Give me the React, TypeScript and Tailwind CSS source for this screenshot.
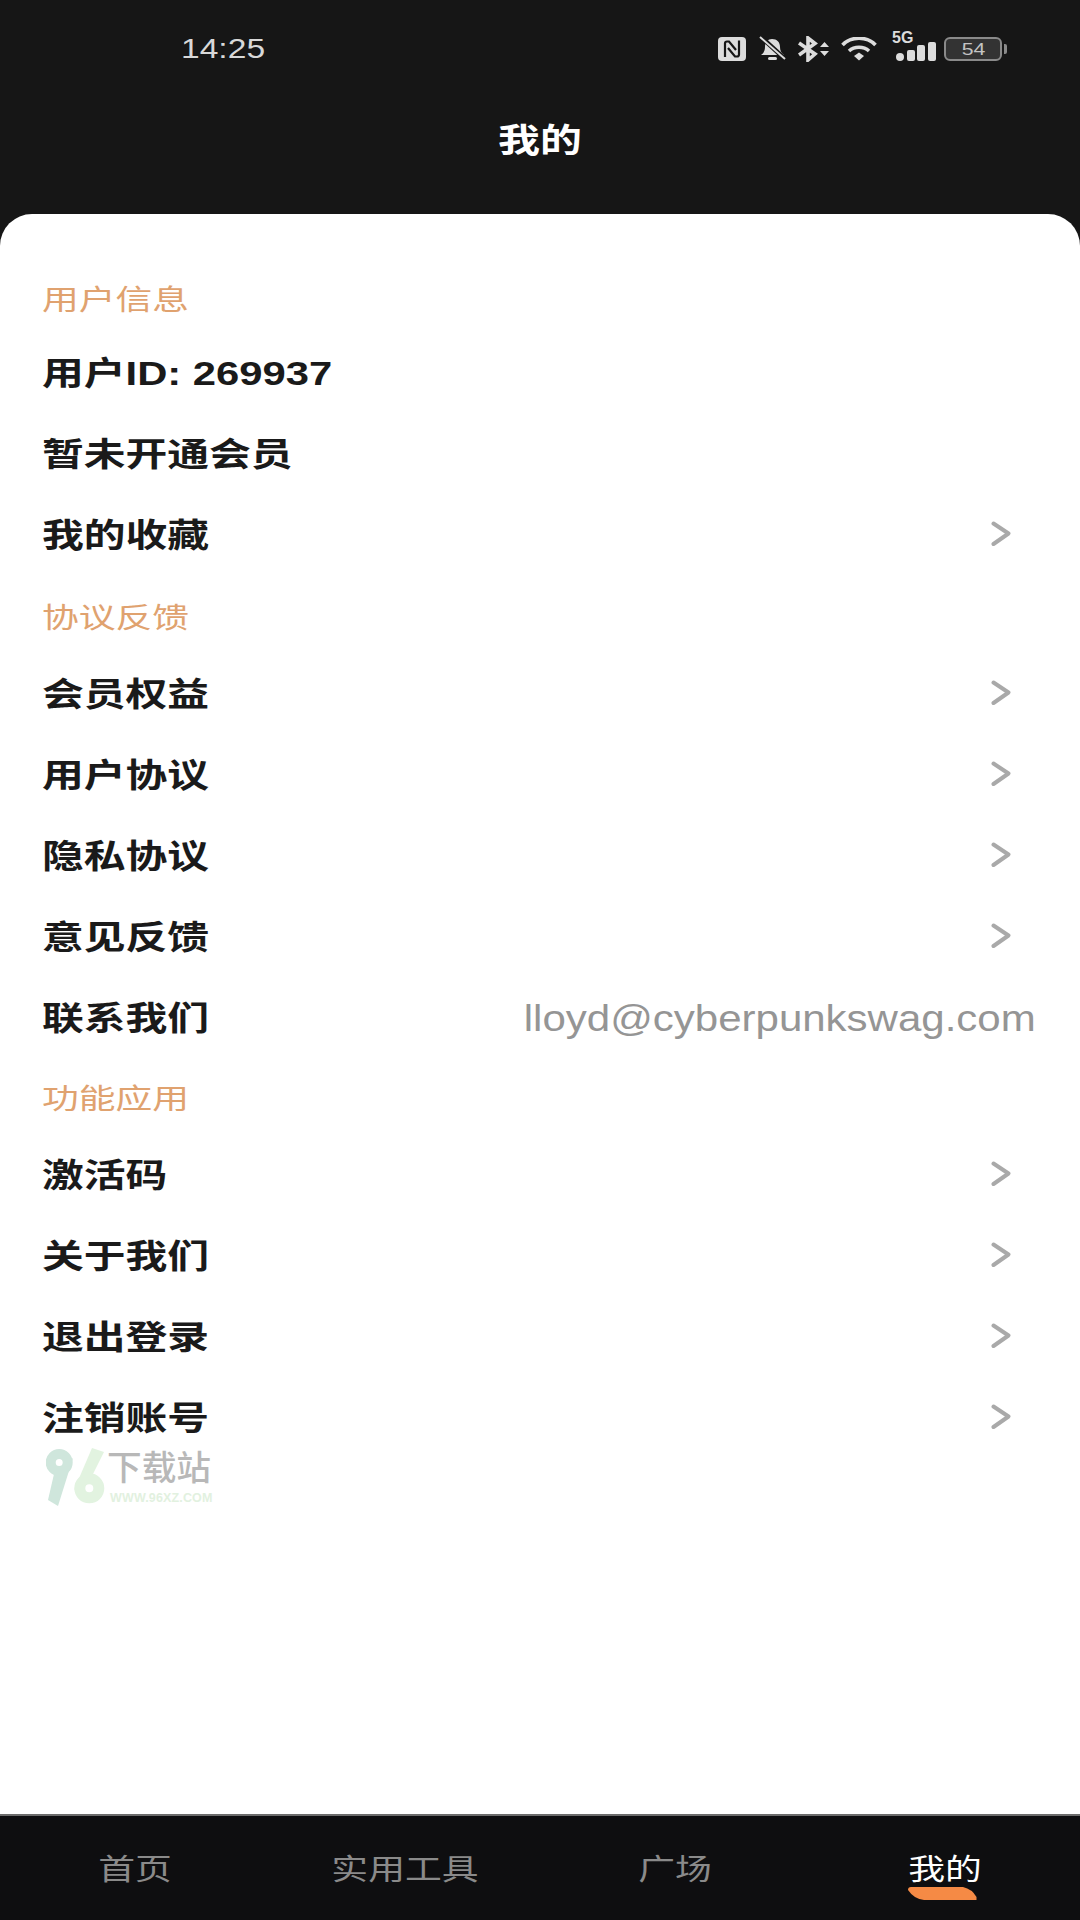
const cjk = "font-['Liberation_Sans','Noto_Sans_CJK_SC',sans-serif]";

function Chevron() {
  return (
    <svg width="20" height="26" viewBox="0 0 20 26" fill="none" className="shrink-0">
      <path d="M2.5 2.5 L17.5 12.5 L2.5 23" stroke="#a9a9a9" strokeWidth="4" strokeLinecap="round" strokeLinejoin="round" />
    </svg>
  );
}

function Row({ label, chevron = true, right }: { label: string; chevron?: boolean; right?: string }) {
  return (
    <div className={`flex h-[81px] items-center justify-between pl-[42px] ${right ? "pr-[44px]" : "pr-[69px]"}`}>
      <span className="origin-left scale-x-[1.285] whitespace-nowrap pt-[5px] text-[32.5px] font-bold leading-none text-[#1a1a1a]">{label}</span>
      {chevron && !right && <Chevron />}
      {right && <span className="origin-right scale-x-[1.167] whitespace-nowrap pt-[5px] text-[36px] leading-none text-[#959595]">{right}</span>}
    </div>
  );
}

function Section({ label }: { label: string }) {
  return (
    <div className="flex h-[76px] items-center pl-[42px] pt-[9px]">
      <span className="origin-left scale-x-[1.29] whitespace-nowrap text-[28.5px] leading-none text-[#e0a26f]">{label}</span>
    </div>
  );
}

function StatusIcons() {
  return (
    <div className="flex items-center pt-[2px]">
      <svg width="28" height="24" viewBox="0 0 28 24">
        <rect x="0" y="0" width="28" height="24" rx="4" fill="#dcdcdc" />
        <path d="M7 20V6.500 Q7 4.500 9 4.500 H11 L18 13 M21 3.500 V17.500 Q21 19.500 19 19.500 H17 L10 11" stroke="#161616" strokeWidth="2.200" fill="none" />
      </svg>
      <svg width="27" height="26" viewBox="0 0 27 26" className="ml-[13px]">
        <path d="M2 19 c3-2 4-5 4-8 c0-5 3-8 7-8 c5 0 8 3 8 8 c0 3 1 6 4 8z" fill="#dcdcdc" />
        <rect x="9" y="21" width="9" height="3" rx="1.500" fill="#dcdcdc" />
        <path d="M1 0 L26 23" stroke="#161616" strokeWidth="4.500" />
        <path d="M1 1 L26 23" stroke="#dcdcdc" strokeWidth="2" />
      </svg>
      <svg width="32" height="26" viewBox="0 0 32 26" className="ml-[12px]">
        <path d="M1 7 L17 18 L10 24 V2 L17 7.500 L1 19" stroke="#dcdcdc" strokeWidth="3.600" fill="none" />
        <path d="M22 11 L26.500 6 L31 11z M22 15 L26.500 20 L31 15z" fill="#dcdcdc" />
      </svg>
      <svg width="36" height="24" viewBox="0 0 36 24" className="ml-[11px]">
        <path d="M1.500 8 C10 -1 26 -1 34.500 8" stroke="#dcdcdc" strokeWidth="3.600" fill="none" />
        <path d="M8 14 C13.500 9 22.500 9 28 14" stroke="#dcdcdc" strokeWidth="3.600" fill="none" />
        <path d="M13 19 L18 15.500 L23 19 L18 23.500z" fill="#dcdcdc" />
      </svg>
      <div className="relative ml-[15px] h-[24px] w-[44px]">
        <span className="absolute left-0 top-[-7px] font-['Liberation_Sans'] text-[16px] font-bold leading-[16px] text-[#dcdcdc]">5G</span>
        <div className="absolute bottom-0 left-[4px] h-[8px] w-[8px] rounded-full bg-[#dcdcdc]" />
        <div className="absolute bottom-0 left-[15px] h-[11px] w-[8px] rounded-[2px] bg-[#dcdcdc]" />
        <div className="absolute bottom-0 left-[25px] h-[16px] w-[8px] rounded-[2px] bg-[#dcdcdc]" />
        <div className="absolute bottom-0 left-[36px] h-[19px] w-[8px] rounded-[2px] bg-[#dcdcdc]" />
      </div>
      <div className="ml-[8px] flex h-[24px] w-[58px] items-center justify-center rounded-[6px] border-2 border-[#8a8a8a] bg-[#333333] font-['Liberation_Sans'] text-[17px] leading-none">
        <span className="origin-center scale-x-[1.25] text-[#c4c4c4]">54</span>
      </div>
      <div className="ml-[2px] h-[10px] w-[3px] rounded-r-[2px] bg-[#8a8a8a]" />
    </div>
  );
}

function Watermark() {
  return (
    <div className="absolute left-[46px] top-[1448px] flex items-start">
      <svg width="60" height="58" viewBox="0 0 60 58" fill="none" className="shrink-0">
        <circle cx="13.200" cy="14.500" r="8.500" stroke="#cfe6dc" strokeWidth="10" />
        <path d="M27 10 L12 58 L2 52 L8 26z" fill="#cfe6dc" />
        <circle cx="43.300" cy="40.300" r="9.500" stroke="#e2f3e0" strokeWidth="11" />
        <path d="M46 0 L58 4 L46 28 L28 42z" fill="#e2f3e0" />
      </svg>
      <div className="ml-[1px] flex flex-col">
        <span className="mt-[2px] origin-left scale-x-[1.02] whitespace-nowrap text-[34px] font-medium leading-[36px] text-[#b8b8b8]">下载站</span>
        <span className="ml-[3px] mt-[5px] whitespace-nowrap font-['Liberation_Sans'] text-[12.5px] font-bold leading-[14px] tracking-[0.15px] text-[#e2f1e0]">WWW.96XZ.COM</span>
      </div>
    </div>
  );
}

export default function App() {
  return (
    <div className={`relative flex h-[1920px] w-[1080px] flex-col overflow-hidden bg-[#161616] ${cjk}`}>
      <div className="h-[214px] shrink-0">
        <div className="flex h-[96px] items-center justify-between pl-[181px] pr-[73px]">
          <span className="origin-left scale-x-[1.2] pt-[2px] font-['Liberation_Sans'] text-[28px] leading-none text-[#d8d8d8]">14:25</span>
          <StatusIcons />
        </div>
        <div className="flex justify-center pt-[27px]">
          <span className="origin-center scale-x-[1.27] text-[33px] font-bold leading-[36px] text-white">我的</span>
        </div>
      </div>
      <div className="flex-1 rounded-t-[32px] bg-white pt-[44px]">
        <Section label="用户信息" />
        <div className="-mt-[3px] mb-[2px]">
          <Row label="用户ID: 269937" chevron={false} />
          <Row label="暂未开通会员" chevron={false} />
          <Row label="我的收藏" />
        </div>
        <Section label="协议反馈" />
        <Row label="会员权益" />
        <Row label="用户协议" />
        <Row label="隐私协议" />
        <Row label="意见反馈" />
        <Row label="联系我们" right="lloyd@cyberpunkswag.com" />
        <Section label="功能应用" />
        <Row label="激活码" />
        <Row label="关于我们" />
        <Row label="退出登录" />
        <Row label="注销账号" />
      </div>
      <div className="grid h-[106px] shrink-0 grid-cols-4 border-t-2 border-[#6b6b6b] bg-[#0e0e10]">
        {["首页", "实用工具", "广场"].map((t) => (
          <div key={t} className="flex items-center justify-center pt-[4px]">
            <span className="origin-center scale-x-[1.27] text-[29px] leading-none text-[#8a8a8a]">{t}</span>
          </div>
        ))}
        <div className="relative flex items-center justify-center pt-[4px]">
          <span className="origin-center scale-x-[1.27] text-[29px] leading-none text-white">我的</span>
          <svg width="69" height="13" viewBox="0 0 69 13" className="absolute left-[98px] top-[71px]">
            <path d="M3 0 H55 Q64 2 68.500 10 V13 H16 Q6 12 0 3 Q0 0 3 0z" fill="#f58a45" />
          </svg>
        </div>
      </div>
      <Watermark />
    </div>
  );
}
